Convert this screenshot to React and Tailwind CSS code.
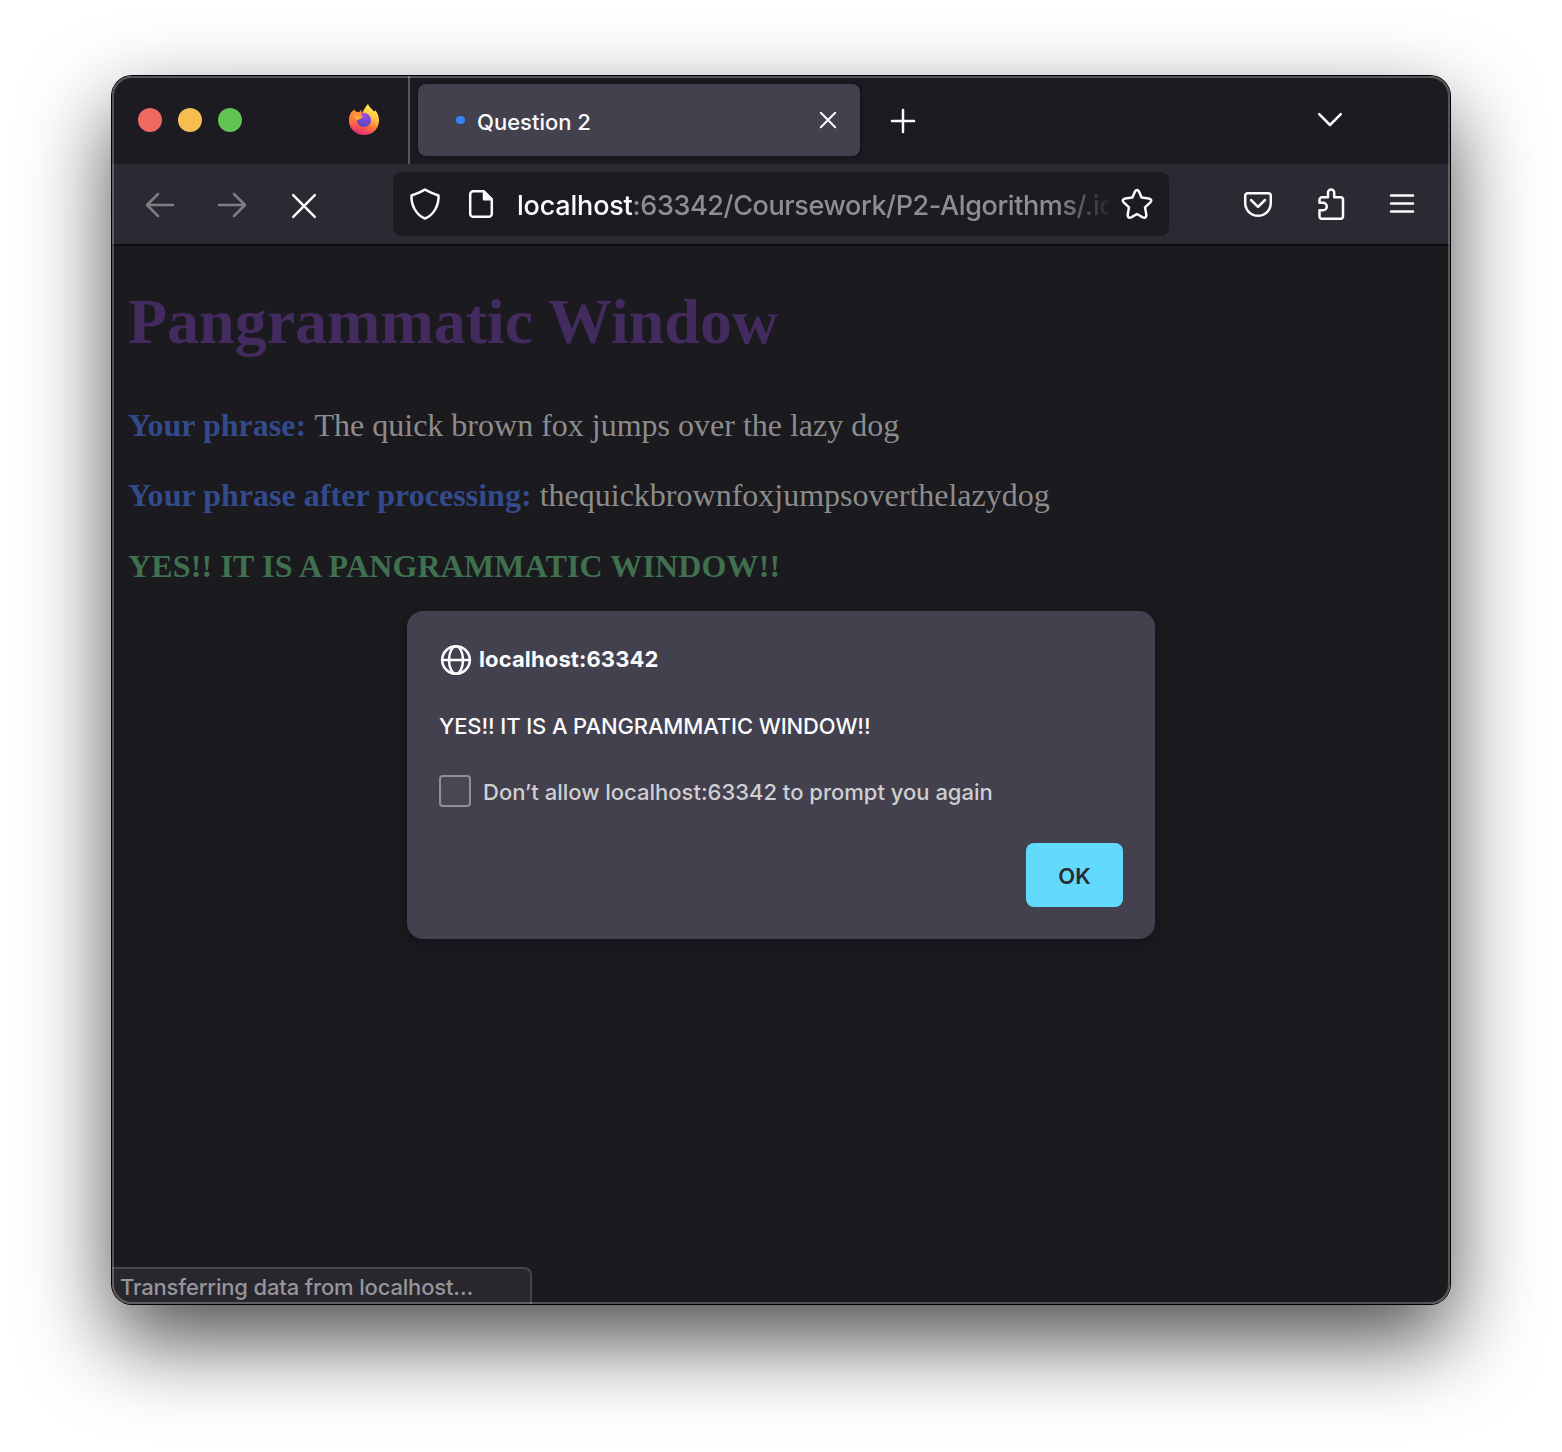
const strokeProps = {
  fill: "none",
  stroke: "currentColor",
  strokeLinecap: "round",
  strokeLinejoin: "round",
};

function Icon({ className = "", strokeWidth = 2.5, children }) {
  return (
    <svg viewBox="0 0 32 32" className={`size-8 shrink-0 ${className}`} {...strokeProps} strokeWidth={strokeWidth}>
      {children}
    </svg>
  );
}

function FirefoxLogo() {
  return (
    <svg viewBox="0 0 32 32" className="size-8 shrink-0">
      <defs>
        <linearGradient id="fxBody" x1="0.8" y1="0.1" x2="0.35" y2="1">
          <stop offset="0" stopColor="#fff04f" />
          <stop offset="0.35" stopColor="#ffb840" />
          <stop offset="0.65" stopColor="#ff6a3c" />
          <stop offset="1" stopColor="#e0267f" />
        </linearGradient>
        <radialGradient id="fxGlobe" cx="0.55" cy="0.15" r="0.85">
          <stop offset="0" stopColor="#a04bea" />
          <stop offset="1" stopColor="#5548c0" />
        </radialGradient>
        <linearGradient id="fxFox" x1="0.2" y1="0" x2="0.3" y2="1">
          <stop offset="0" stopColor="#ff9a3c" />
          <stop offset="0.5" stopColor="#ff6f3e" />
          <stop offset="1" stopColor="#f5394f" stopOpacity="0" />
        </linearGradient>
      </defs>
      <path d="M20 0c1 3 3.600 4.500 5.600 7 .9.600 1.500 0 1.600-.8 2.300 2.500 3.800 6 3.800 10.300C31 25 24.300 31 16 31S1 24.800 1 16.500C1 13 2 9.500 4 7.300L14 9.500C15.500 6 17.500 2.500 20 0Z" fill="url(#fxBody)" />
      <path d="M6.600 5.200c.2 1.300.8 2.200 1.700 2.800L12 9v6l-2 7 5 8C7 30 1 24 1 16.500 1 13 2.500 9.500 4.600 7.800c.3-1 1-1.900 2-2.600Z" fill="url(#fxFox)" />
      <circle cx="16" cy="16" r="7" fill="url(#fxGlobe)" />
      <path d="M6.600 8c1.600-.3 3.400-.1 4.700.3.600-1.400 1.500-2 2.600-2.500-.6 1.300-.6 2.400.1 3.100-.5 1.200-.4 2 .6 2.700 0 1.400-1.600 1.900-2.700 2.600-1 .9-1.400 1.900-3.600 1.800L5 13Z" fill="#ff8f3a" />
      <path d="M5.500 12.800c2-.7 4-.5 5.500.1 1.600.5 3 .1 4.200-.5-.3 1.500-2.200 1.900-3.400 2.500-2.200 1.200-4.300.1-6.300-2.100Z" fill="#ffad3f" />
    </svg>
  );
}

function TabStrip() {
  return (
    <div className="flex h-[88px] bg-[#1c1b22]">
      <div className="flex w-[298px] items-center border-r-2 border-[#57565c] pl-[26px]">
        <div className="flex gap-4">
          <span className="size-6 rounded-full bg-[#ee6a5f]" />
          <span className="size-6 rounded-full bg-[#f5be4f]" />
          <span className="size-6 rounded-full bg-[#61c454]" />
        </div>
        <div className="ml-[106px]">
          <FirefoxLogo />
        </div>
      </div>
      <div className="mt-2 ml-2 flex h-[72px] w-[442px] items-center rounded-lg bg-[#42414d] pr-4 pl-[38px] text-[#fbfbfe] shadow-[0_0_4px_rgba(0,0,0,0.5)]">
        <span className="size-[8.5px] rounded-full bg-[#3484f7]" />
        <span className="mt-[3px] ml-[12.5px] flex-1 text-[22px] leading-7 font-medium whitespace-nowrap">Question 2</span>
        <Icon strokeWidth={2}>
          <path d="M8.800 8.800l14.400 14.400M23.200 8.800L8.800 23.200" />
        </Icon>
      </div>
      <div className="flex flex-1 items-center pl-[27px] text-[#fbfbfe]">
        <Icon className="mt-[2px]">
          <path d="M16 5v22M5 16h22" />
        </Icon>
        <Icon className="ml-[395px]">
          <path d="M5.200 10.200L16 21l10.800-10.800" />
        </Icon>
      </div>
    </div>
  );
}

function UrlBar() {
  return (
    <div className="ml-[73px] flex h-16 w-[776px] items-center rounded-lg bg-[#1c1b22] pr-4 pl-4">
      <Icon>
        <path d="M16 1.500c4 2.500 8.500 4.200 13.500 6C30 17 25 27 16 30.500 7 27 2 17 2.500 7.500 7.500 5.700 12 4 16 1.500Z" />
      </Icon>
      <Icon className="ml-6">
        <path d="M8.200 3.200h10.300L26.800 11.500V25.700a3 3 0 0 1-3 3H8.200a3 3 0 0 1-3-3V6.200a3 3 0 0 1 3-3Z" />
        <path d="M19 3.500v7.700h7.500Z" fill="currentColor" />
      </Icon>
      <span className="mt-[3px] ml-5 w-[592px] overflow-hidden text-[27px] leading-9 font-medium tracking-[-0.4px] whitespace-nowrap text-[#8d8d92] [mask-image:linear-gradient(to_right,black_540px,transparent_596px)]">
        <span className="tracking-[-0.2px] text-[#fbfbfe]">localhost</span>:63342/Coursework/P2-Algorithms/.idea
      </span>
      <Icon className="ml-3">
        <path d="M14 3.500Q16 .3 18 3.500L20.600 9.600 27.800 10.500Q31.800 11.500 29.300 14.400L24 19.300 25.300 26.500Q25.500 30.800 21.800 29.300L16 26 10.200 29.300Q6.500 30.800 6.700 26.500L8 19.300 2.700 14.400Q.2 11.500 4.200 10.500L11.400 9.600Z" />
      </Icon>
    </div>
  );
}

function Toolbar() {
  return (
    <div className="flex h-[82px] items-center border-b-2 border-[#0d0c11] bg-[#2b2a33] pl-8 text-[#fbfbfe]">
      <Icon className="mt-[2px] text-[#7f7e84]">
        <path d="M29 16H3M14 5L3 16l11 11" />
      </Icon>
      <Icon className="mt-[2px] ml-10 text-[#7f7e84]">
        <path d="M3 16h26M18 5l11 11-11 11" />
      </Icon>
      <Icon className="mt-1 ml-10">
        <path d="M5.200 5.200l21.600 21.600M26.800 5.200L5.200 26.800" />
      </Icon>
      <UrlBar />
      <Icon className="ml-[73px]">
        <path d="M5.700 5.200h20.600a2.500 2.500 0 0 1 2.500 2.500V15a12.800 12.800 0 0 1-25.600 0V7.700a2.500 2.500 0 0 1 2.500-2.500Z" />
        <path d="M9 12l7 6.800 7-6.800" />
      </Icon>
      <Icon className="ml-10">
        <path d="M14 9.300V4.500a3.100 3.100 0 0 1 6.200 0v4.800H26.500a2.500 2.500 0 0 1 2.500 2.500V28.500a2.300 2.300 0 0 1-2.300 2.300H7.800A2.300 2.300 0 0 1 5.500 28.500V22.300H9a3.800 3.800 0 0 0 0-7.600H5.500V11.800a2.500 2.500 0 0 1 2.500-2.500Z" />
      </Icon>
      <Icon className="ml-10">
        <path d="M5 7.500h22M5 15.500h22M5 23.500h22" />
      </Icon>
    </div>
  );
}

function Dialog() {
  return (
    <div className="absolute top-[535px] left-[295px] flex h-[328px] w-[748px] flex-col rounded-2xl bg-[#42414d] px-8 pt-8 pb-8 text-[22px] text-[#fbfbfe] shadow-[0_4px_16px_rgba(14,13,26,0.5)]">
      <div className="flex h-8 items-center">
        <Icon className="ml-px">
          <circle cx="16" cy="17" r="13.800" />
          <ellipse cx="16" cy="17" rx="7" ry="13.800" />
          <path d="M2 17h28" />
        </Icon>
        <span className="ml-[7px] leading-8 font-bold tracking-[0.12px] whitespace-nowrap">localhost:63342</span>
      </div>
      <p className="mt-[35px] leading-8 font-medium tracking-[-0.12px] whitespace-nowrap">YES!! IT IS A PANGRAMMATIC WINDOW!!</p>
      <label className="mt-[33px] flex h-8 items-center text-[#cfcfd3]">
        <span className="size-8 rounded border-2 border-[#8f8f9d] bg-[#484752]" />
        <span className="mt-[2px] ml-3 leading-8 font-medium whitespace-nowrap">Don’t allow localhost:63342 to prompt you again</span>
      </label>
      <button className="mt-auto h-16 w-[97px] self-end rounded-lg bg-[#61dafb] pt-[2px] text-[22px] font-semibold text-[#2b2a33]">OK</button>
    </div>
  );
}

export default function App() {
  return (
    <div className="h-[1452px] w-[1562px] overflow-hidden bg-white pt-[76px] pl-[112px] font-['Inter',sans-serif]">
      <div className="relative flex h-[1228px] w-[1338px] flex-col rounded-[20px] shadow-[0_0_0_1px_#000,0_36px_86px_rgba(0,0,0,0.7)]">
        <div className="flex flex-1 flex-col overflow-hidden rounded-[20px] bg-[#1b1a1e]">
          <TabStrip />
          <Toolbar />
          <main className="flex-1 px-4 pt-[39px] font-['Liberation_Serif',serif] text-[32px] leading-9 text-[#8c8c8c]">
            <h1 className="text-[64px] leading-[74px] font-bold text-[#432b60]">Pangrammatic Window</h1>
            <p className="mt-12 whitespace-nowrap"><b className="mr-px text-[#334a8c]">Your phrase:</b> The quick brown fox jumps over the lazy dog</p>
            <p className="mt-[34px] whitespace-nowrap"><b className="tracking-[0.035px] text-[#334a8c]">Your phrase after processing:</b> thequickbrownfoxjumpsoverthelazydog</p>
            <p className="mt-[35px] font-bold tracking-[0.14px] whitespace-nowrap text-[#3f704f]">YES!! IT IS A PANGRAMMATIC WINDOW!!</p>
          </main>
          <div className="flex h-[37px] w-[420px] items-center rounded-tr-lg border-t-2 border-r-2 border-[#47464d] bg-[#28272d] pl-2 text-[22px] leading-8 font-medium tracking-[-0.16px] whitespace-nowrap text-[#96959b]">
            Transferring data from localhost…
          </div>
        </div>
        <Dialog />
        <div className="pointer-events-none absolute inset-0 rounded-[20px] border-2 border-white/25" />
      </div>
    </div>
  );
}
